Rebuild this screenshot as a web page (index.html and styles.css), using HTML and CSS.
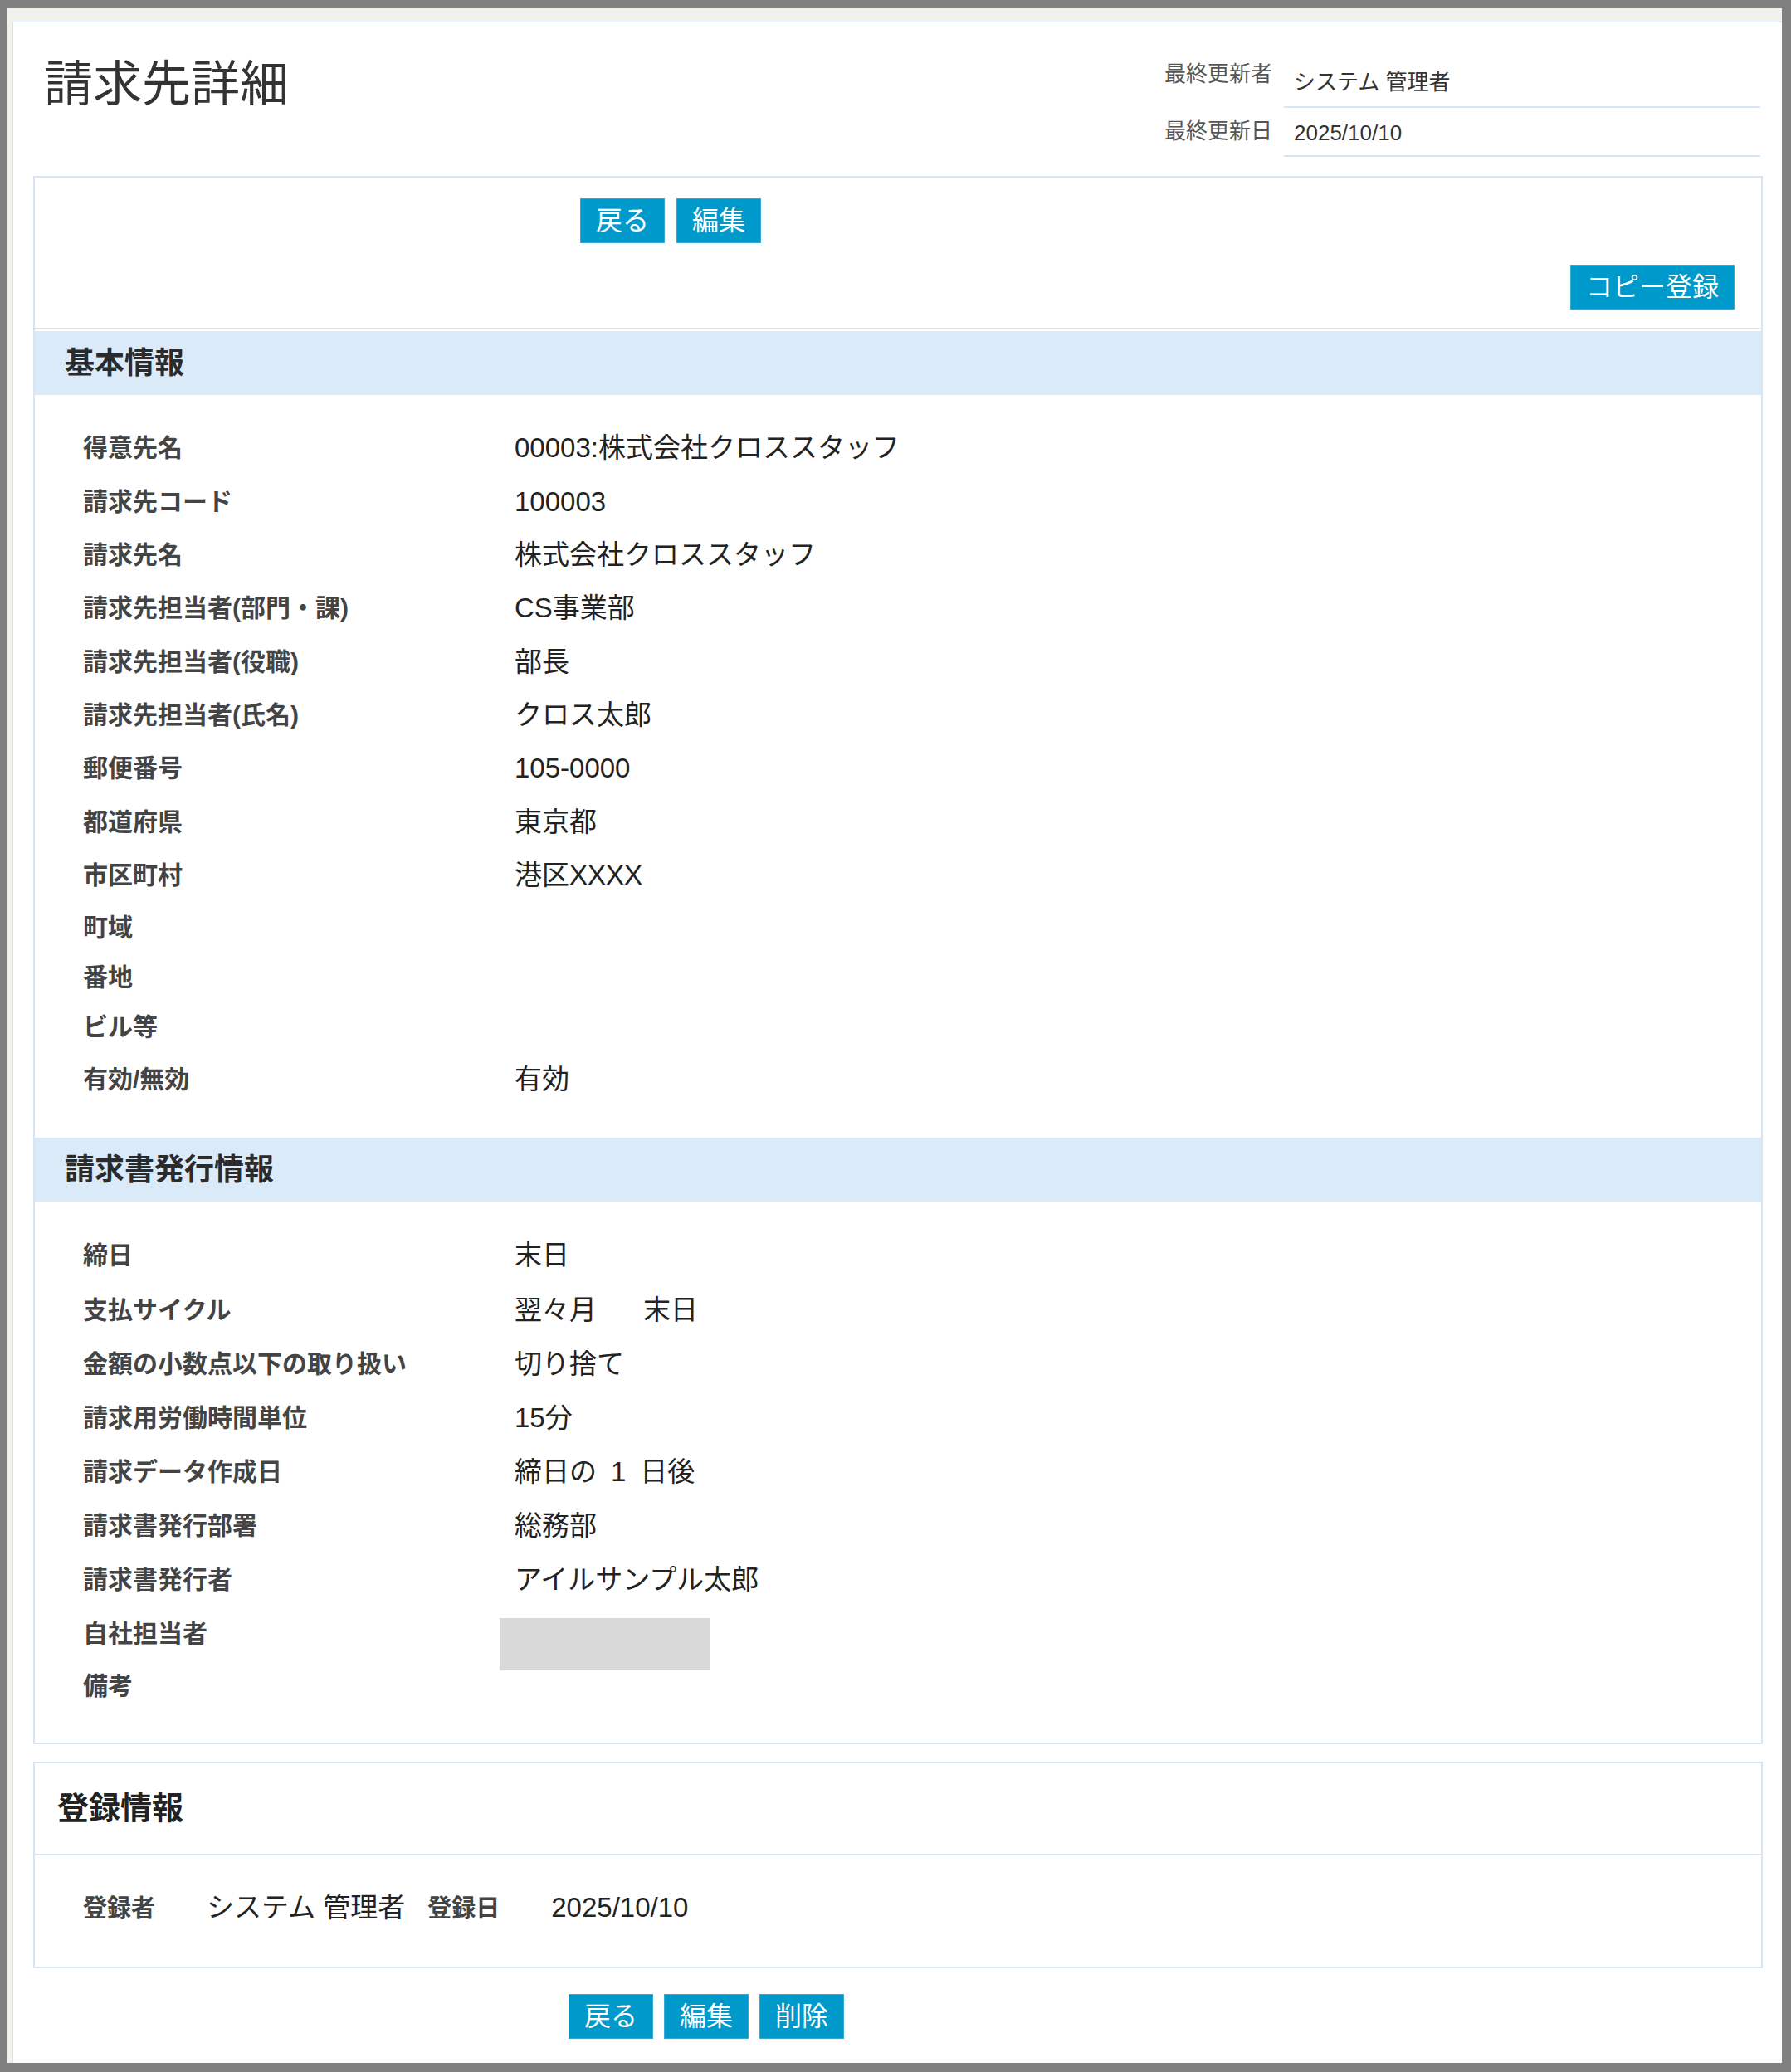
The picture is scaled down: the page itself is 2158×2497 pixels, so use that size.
FILE: index.html
```html
<!DOCTYPE html>
<html lang="ja">
<head>
    <meta charset="utf-8">
    <title>請求先詳細</title>
    <link rel="stylesheet" href="styles.css">
</head>
<body>
<div class="screen">
    <div class="page">
        <header class="page-head">
            <h1 class="title">請求先詳細</h1>
            <dl class="meta">
                <dt>最終更新者</dt>
                <dd class="first">システム 管理者</dd>
                <dt>最終更新日</dt>
                <dd>2025/10/10</dd>
            </dl>
        </header>

        <section class="card">
            <div class="toolbar">
                <div class="actions top">
                    <a class="btn">戻る</a>
                    <a class="btn">編集</a>
                </div>
                <div class="copy-row">
                    <a class="btn">コピー登録</a>
                </div>
            </div>

            <h2 class="sec-head">基本情報</h2>
            <div class="rows basic">
                <div class="row"><span class="lbl">得意先名</span><span class="val">00003:株式会社クロススタッフ</span></div>
                <div class="row"><span class="lbl">請求先コード</span><span class="val">100003</span></div>
                <div class="row"><span class="lbl">請求先名</span><span class="val">株式会社クロススタッフ</span></div>
                <div class="row"><span class="lbl">請求先担当者(部門・課)</span><span class="val">CS事業部</span></div>
                <div class="row"><span class="lbl">請求先担当者(役職)</span><span class="val">部長</span></div>
                <div class="row"><span class="lbl">請求先担当者(氏名)</span><span class="val">クロス太郎</span></div>
                <div class="row"><span class="lbl">郵便番号</span><span class="val">105-0000</span></div>
                <div class="row"><span class="lbl">都道府県</span><span class="val">東京都</span></div>
                <div class="row"><span class="lbl">市区町村</span><span class="val">港区XXXX</span></div>
                <div class="row"><span class="lbl">町域</span><span class="val"></span></div>
                <div class="row"><span class="lbl">番地</span><span class="val"></span></div>
                <div class="row"><span class="lbl">ビル等</span><span class="val"></span></div>
                <div class="row"><span class="lbl">有効/無効</span><span class="val">有効</span></div>
            </div>

            <h2 class="sec-head">請求書発行情報</h2>
            <div class="rows issue">
                <div class="row"><span class="lbl">締日</span><span class="val">末日</span></div>
                <div class="row"><span class="lbl">支払サイクル</span><span class="val">翌々月<span class="pair">末日</span></span></div>
                <div class="row"><span class="lbl">金額の小数点以下の取り扱い</span><span class="val">切り捨て</span></div>
                <div class="row"><span class="lbl">請求用労働時間単位</span><span class="val">15分</span></div>
                <div class="row"><span class="lbl">請求データ作成日</span><span class="val">締日の<span class="num">1</span>日後</span></div>
                <div class="row"><span class="lbl">請求書発行部署</span><span class="val">総務部</span></div>
                <div class="row"><span class="lbl">請求書発行者</span><span class="val">アイルサンプル太郎</span></div>
                <div class="row"><span class="lbl">自社担当者</span><span class="val"><span class="blank"></span></span></div>
                <div class="row"><span class="lbl">備考</span><span class="val"></span></div>
            </div>
        </section>

        <section class="card reg">
            <h2 class="reg-head">登録情報</h2>
            <div class="reg-body">
                <span class="lbl">登録者</span>
                <span class="val">システム 管理者</span>
                <span class="lbl">登録日</span>
                <span class="val">2025/10/10</span>
            </div>
        </section>

        <div class="actions bottom">
            <a class="btn">戻る</a>
            <a class="btn">編集</a>
            <a class="btn">削除</a>
        </div>
    </div>
</div>
</body>
</html>
```

FILE: styles.css
```css
html, body {
    margin: 0;
    height: 100%;
}

body {
    background: #808080;
    padding: 10px 11px 11px 8px;
    box-sizing: border-box;
    display: flex;
    flex-direction: column;
    font-family: "Liberation Sans", "Noto Sans CJK JP", sans-serif;
    color: #222;
}

.screen {
    flex: 1;
    background: #f2f1ed;
    padding: 16px 0 0 7px;
    display: flex;
    flex-direction: column;
}

.page {
    flex: 1;
    background: #fff;
    border-top: 1px solid #cfe2f5;
    border-left: 1px solid #cfe2f5;
    padding: 0 23px 29px 24px;
}

/* title + last update block */
.page-head {
    display: flex;
    justify-content: space-between;
    align-items: flex-start;
    margin-bottom: 23px;
}

.title {
    margin: 40px 0 0 13px;
    font-size: 59px;
    line-height: 70px;
    font-weight: 400;
    color: #333;
}

.meta {
    display: grid;
    grid-template-columns: auto 574px;
    margin: 34px 3px 0 0;
    font-size: 26px;
    line-height: 30px;
}

.meta dt {
    color: #555;
    padding: 13px 14px 0 0;
}

.meta dd {
    margin: 0;
    color: #333;
    padding: 0 0 12px 12px;
    min-height: 59px;
    box-sizing: border-box;
    display: flex;
    align-items: flex-end;
    border-bottom: 2px solid #d5e5f6;
}

.meta dd.first {
    min-height: 69px;
    padding-bottom: 14px;
}

/* cards */
.card {
    border: 2px solid #d5e5f6;
}

.toolbar {
    padding: 25px 32px 22px 657px;
    border-bottom: 1px solid #cfe2f5;
    margin-bottom: 3px;
}

.actions {
    display: flex;
    gap: 14px;
}

.copy-row {
    display: flex;
    justify-content: flex-end;
    margin-top: 26px;
}

.btn {
    display: inline-block;
    background: #0099cb;
    border: 1px solid #34abd6;
    color: #fff;
    font-size: 32px;
    line-height: 52px;
    padding: 0 18px;
    cursor: pointer;
}

.sec-head {
    margin: 0;
    background: #dbeaf8;
    height: 77px;
    line-height: 77px;
    padding-left: 36px;
    font-size: 36px;
    font-weight: 700;
    color: #2b2b2b;
}

.rows {
    padding: 32px 58px 38px;
}

.row {
    display: grid;
    grid-template-columns: 520px 1fr;
    align-items: center;
    padding: 13.2px 0;
}

.issue {
    padding: 33px 58px 37px;
}

.issue .row {
    padding: 13.55px 0;
}

.lbl {
    font-size: 30px;
    line-height: 34px;
    font-weight: 700;
    color: #444;
}

.val {
    font-size: 33px;
    line-height: 38px;
    color: #222;
    white-space: pre;
}

.pair {
    margin-left: 56px;
}

.num {
    margin: 0 17px;
}

/* person in charge: empty grey select */
.blank {
    display: block;
    width: 254px;
    height: 63px;
    margin: 0 0 -25px -18px;
    background: #d9d9d9;
}

.reg {
    margin-top: 21px;
}

.reg-head {
    margin: 0;
    height: 109px;
    line-height: 109px;
    padding-left: 27px;
    font-size: 38px;
    font-weight: 700;
    color: #222;
    border-bottom: 2px solid #d5e5f6;
}

.reg-body {
    height: 134px;
    display: flex;
    align-items: baseline;
    padding: 44px 0 0 58px;
    box-sizing: border-box;
}

.reg-body .lbl {
    font-size: 29px;
    margin-right: 62px;
}

.reg-body .val {
    margin-right: 27px;
}

.bottom {
    margin: 31px 0 0 645px;
    gap: 13px;
}
```
